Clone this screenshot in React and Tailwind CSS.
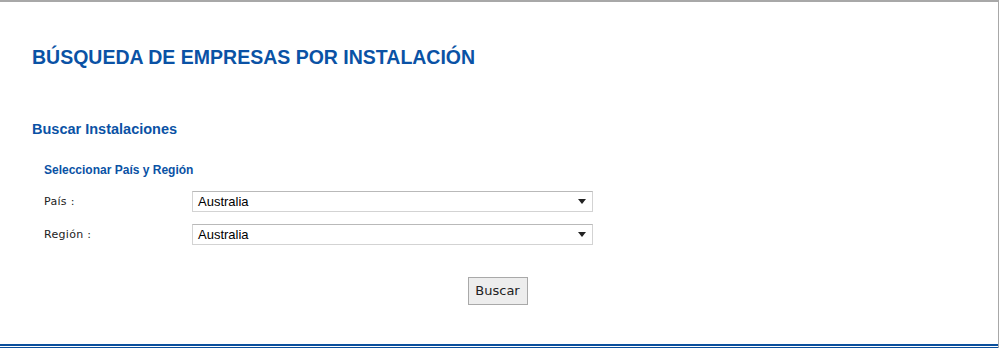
const Select = ({ value }) => (
  <div className="flex h-[21px] w-[401px] items-center justify-between border border-[#d3d3d3] border-t-[#b9b9b9] bg-white pl-[5px] pr-[6px] text-[13px] text-black font-['Liberation_Sans',Arial,sans-serif]">
    <span>{value}</span>
    <svg width="8" height="5" viewBox="0 0 8 5">
      <path d="M0 0h8L4 5z" fill="#222" />
    </svg>
  </div>
);

const Row = ({ label, value }) => (
  <div className="flex items-center">
    <div className="w-[192px] shrink-0 pl-[44px] pt-[2px] text-[11px] text-[#222] font-['DejaVu_Sans',Verdana,sans-serif] tracking-[0.3px]">
      {label}
    </div>
    <Select value={value} />
  </div>
);

export default function App() {
  return (
    <div className="w-[1001px] h-[348px] bg-white">
      <div className="flex h-full w-[999px] flex-col border-t-2 border-r border-[#a8a8a8]">
        <div className="flex-1">
          <h1 className="mt-[43px] pl-[32px] text-[19.5px] font-bold leading-[24px] text-[#0a52a5] font-['Liberation_Sans',Arial,sans-serif]">
            BÚSQUEDA DE EMPRESAS POR INSTALACIÓN
          </h1>
          <h2 className="mt-[52px] pl-[32px] text-[14.5px] font-bold leading-[17px] text-[#0a52a5] font-['Liberation_Sans',Arial,sans-serif]">
            Buscar Instalaciones
          </h2>
          <h3 className="mt-[25px] pl-[44px] text-[12px] font-bold leading-[14px] text-[#0a52a5] font-['Liberation_Sans',Arial,sans-serif]">
            Seleccionar País y Región
          </h3>
          <div className="mt-[14px] flex flex-col gap-[12px]">
            <Row label="País :" value="Australia" />
            <Row label="Región :" value="Australia" />
          </div>
          <div className="mt-[32px] flex justify-center">
            <button className="ml-[-3px] h-[28px] w-[60px] border border-[#a9a9a9] bg-[#ededed] text-[13px] text-[#222] font-['DejaVu_Sans',Verdana,sans-serif]">
              Buscar
            </button>
          </div>
        </div>
        <div className="flex flex-col">
          <div className="h-[2px] bg-[#0a4f9c]" />
          <div className="h-[1px] bg-white" />
          <div className="h-[1px] bg-[#0a4f9c]" />
        </div>
      </div>
    </div>
  );
}
